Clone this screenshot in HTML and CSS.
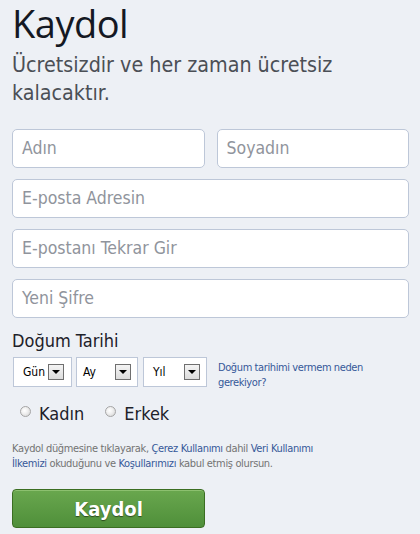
FILE: index.html
```html
<!DOCTYPE html>
<html lang="tr">
<head>
<meta charset="utf-8">
<link rel="stylesheet" href="styles.css">
</head>
<body>
<div class="page">
  <h1 class="title">Kaydol</h1>
  <p class="subtitle">Ücretsizdir ve her zaman ücretsiz kalacaktır.</p>
  <div class="fields">
    <div class="row2">
      <div class="input">Adın</div>
      <div class="input">Soyadın</div>
    </div>
    <div class="input">E-posta Adresin</div>
    <div class="input">E-postanı Tekrar Gir</div>
    <div class="input">Yeni Şifre</div>
  </div>
  <div class="bday-label">Doğum Tarihi</div>
  <div class="bday-row">
    <div class="select sel-gun"><span class="sel-text">Gün</span><span class="arrow"><span class="tri"></span></span></div>
    <div class="select sel-ay"><span class="sel-text">Ay</span><span class="arrow"><span class="tri"></span></span></div>
    <div class="select sel-yil"><span class="sel-text">Yıl</span><span class="arrow"><span class="tri"></span></span></div>
    <a class="why">Doğum tarihimi vermem neden<br>gerekiyor?</a>
  </div>
  <div class="gender">
    <label class="radio"><span class="dot"></span>Kadın</label>
    <label class="radio"><span class="dot"></span>Erkek</label>
  </div>
  <p class="terms">Kaydol düğmesine tıklayarak, <a>Çerez Kullanımı</a> dahil <a>Veri Kullanımı<br>İlkemizi</a> okuduğunu ve <a>Koşullarımızı</a> kabul etmiş olursun.</p>
  <button class="submit">Kaydol</button>
</div>
</body>
</html>
```
FILE: styles.css
```css
html, body {
  margin: 0;
  padding: 0;
  background: #edf0f5;
}
body {
  font-family: "DejaVu Sans Condensed", "DejaVu Sans", sans-serif;
  color: #1d2129;
  width: 420px;
  height: 534px;
  overflow: hidden;
}
.page {
  padding: 0 11px 0 12px;
}
.title {
  margin: 0;
  font-family: "Open Sans", "Noto Sans", sans-serif;
  font-weight: 400;
  font-size: 38px;
  line-height: 46px;
  color: #141823;
  letter-spacing: -0.5px;
}
.subtitle {
  margin: 5px 0 0;
  font-size: 21.3px;
  line-height: 28px;
  color: #4b4f56;
  width: 370px;
}
.fields {
  margin-top: 22px;
  display: flex;
  flex-direction: column;
  gap: 11px;
}
.row2 {
  display: flex;
  gap: 12px;
}
.row2 .input {
  flex: 1;
}
.input {
  box-sizing: border-box;
  height: 39px;
  background: #fff;
  border: 1px solid #bdc7d8;
  border-radius: 5px;
  padding: 0 9px;
  font-size: 17.5px;
  line-height: 37px;
  color: #90949c;
}
.bday-label {
  margin-top: 11px;
  font-size: 18px;
  line-height: 24px;
  color: #1d2129;
}
.bday-row {
  margin-top: 4px;
  display: flex;
  align-items: flex-start;
  padding-left: 1px;
}
.select {
  box-sizing: border-box;
  height: 30px;
  background: #fff;
  border: 1px solid #bdc7d8;
  display: flex;
  align-items: center;
  font-size: 12px;
  color: #000;
}
.sel-gun { width: 59px; padding-left: 9px; }
.sel-ay { width: 62px; margin-left: 4px; padding-left: 6px; }
.sel-yil { width: 64px; margin-left: 5px; padding-left: 9px; }
.sel-text { flex: 1; }
.arrow {
  box-sizing: border-box;
  width: 16px;
  height: 16px;
  border: 1px solid #6f6f6f;
  background: linear-gradient(#f4f4f4, #dcdcdc);
  display: flex;
  align-items: center;
  justify-content: center;
  margin-right: 6px;
}
.sel-gun .arrow { margin-right: 7px; }
.tri {
  width: 0;
  height: 0;
  border-left: 4px solid transparent;
  border-right: 4px solid transparent;
  border-top: 4px solid #000;
}
.why {
  margin-left: 11px;
  margin-top: 3px;
  font-size: 11px;
  line-height: 15px;
  letter-spacing: -0.4px;
  color: #365899;
  white-space: nowrap;
}
.gender {
  margin-top: 12px;
  display: flex;
  gap: 21px;
  padding-left: 8px;
}
.radio {
  display: flex;
  align-items: center;
  font-size: 18px;
  line-height: 24px;
  color: #1d2129;
}
.dot {
  box-sizing: border-box;
  width: 11px;
  height: 11px;
  border-radius: 50%;
  border: 1px solid #a5a5a5;
  background: radial-gradient(circle at 40% 40%, #fff 0, #f0f0f0 40%, #cfcfcf 100%);
  margin-right: 8px;
  margin-top: -6px;
}
.terms {
  margin: 15px 0 0;
  font-size: 11px;
  line-height: 15px;
  letter-spacing: -0.35px;
  color: #737373;
  white-space: nowrap;
}
.terms a {
  color: #365899;
}
.submit {
  display: block;
  margin-top: 18px;
  width: 193px;
  height: 39px;
  border: 1px solid #3b6e22;
  border-radius: 4px;
  background: linear-gradient(#69a74e, #4f8f3a);
  box-shadow: inset 0 1px 0 #8cc06f;
  color: #fff;
  font-family: "DejaVu Sans Condensed", "DejaVu Sans", sans-serif;
  font-weight: bold;
  font-size: 20px;
  text-shadow: 0 1px 1px #2c4b1e;
  cursor: pointer;
  padding: 0;
}
```
